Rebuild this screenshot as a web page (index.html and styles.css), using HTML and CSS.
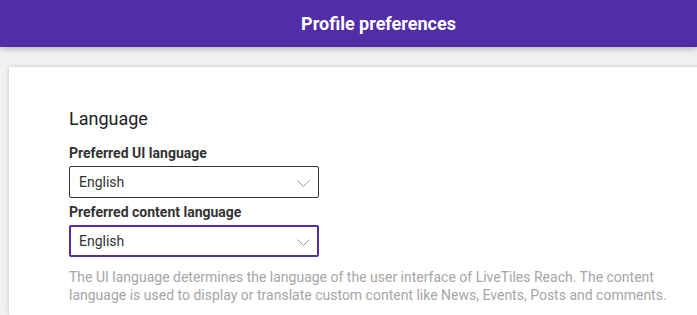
FILE: index.html
```html
<!DOCTYPE html>
<html lang="en">
<head>
    <meta charset="UTF-8">
    <title>Profile preferences</title>
    <link rel="stylesheet" href="styles.css">
</head>
<body>
    <header class="topbar">
        <h1>Profile preferences</h1>
    </header>

    <main class="page">
        <section class="card">
            <h2>Language</h2>

            <label class="field-label">Preferred UI language</label>
            <div class="select">
                <span>English</span>
                <svg class="chevron" width="13" height="7" viewBox="0 0 13 7"><path d="M0.5 0.5l6 6 6-6" fill="none" stroke="#9a9a9a" stroke-width="1"/></svg>
            </div>

            <label class="field-label">Preferred content language</label>
            <div class="select focused">
                <span>English</span>
                <svg class="chevron" width="13" height="7" viewBox="0 0 13 7"><path d="M0.5 0.5l6 6 6-6" fill="none" stroke="#9a9a9a" stroke-width="1"/></svg>
            </div>

            <p class="hint">
                The UI language determines the language of the user interface of LiveTiles Reach. The content
                language is used to display or translate custom content like News, Events, Posts and comments.
            </p>
        </section>
    </main>
</body>
</html>
```

FILE: styles.css
```css
* {
    margin: 0;
    padding: 0;
    box-sizing: border-box;
}

body {
    font-family: Roboto, "Liberation Sans", sans-serif;
    background: #f1f1f1;
    color: #333;
    height: 315px;
    overflow: hidden;
}

.topbar {
    height: 47px;
    background: #512da8;
    display: flex;
    align-items: center;
    justify-content: center;
    padding-left: 60px;
    box-shadow: 0 2px 6px rgba(0, 0, 0, 0.25);
    position: relative;
}

.topbar h1 {
    color: #fff;
    font-size: 18px;
    font-weight: 700;
}

.page {
    padding: 20px 0 0 9px;
}

.card {
    background: #fff;
    width: 720px;
    height: 248px;
    padding: 40px 60px 0;
    box-shadow: 0 0 4px rgba(0, 0, 0, 0.2);
}

.card h2 {
    font-size: 18px;
    font-weight: 400;
    color: #222;
    line-height: 24px;
    margin-bottom: 13px;
}

.field-label {
    display: block;
    font-size: 14px;
    font-weight: 700;
    color: #333;
    line-height: 18px;
    margin-bottom: 4px;
}

.select {
    width: 250px;
    height: 32px;
    border: 1px solid #333;
    border-radius: 2px;
    display: flex;
    align-items: center;
    justify-content: space-between;
    padding: 0 8px 0 9px;
    font-size: 14px;
    color: #333;
    margin-bottom: 5px;
}

.select.focused {
    border: 2px solid #512da8;
    padding-left: 8px;
    padding-right: 7px;
}

.chevron {
    margin-top: 2px;
}

.hint {
    margin-top: 11px;
    font-size: 14px;
    line-height: 18px;
    color: #a6a6a6;
    width: 610px;
}
```
